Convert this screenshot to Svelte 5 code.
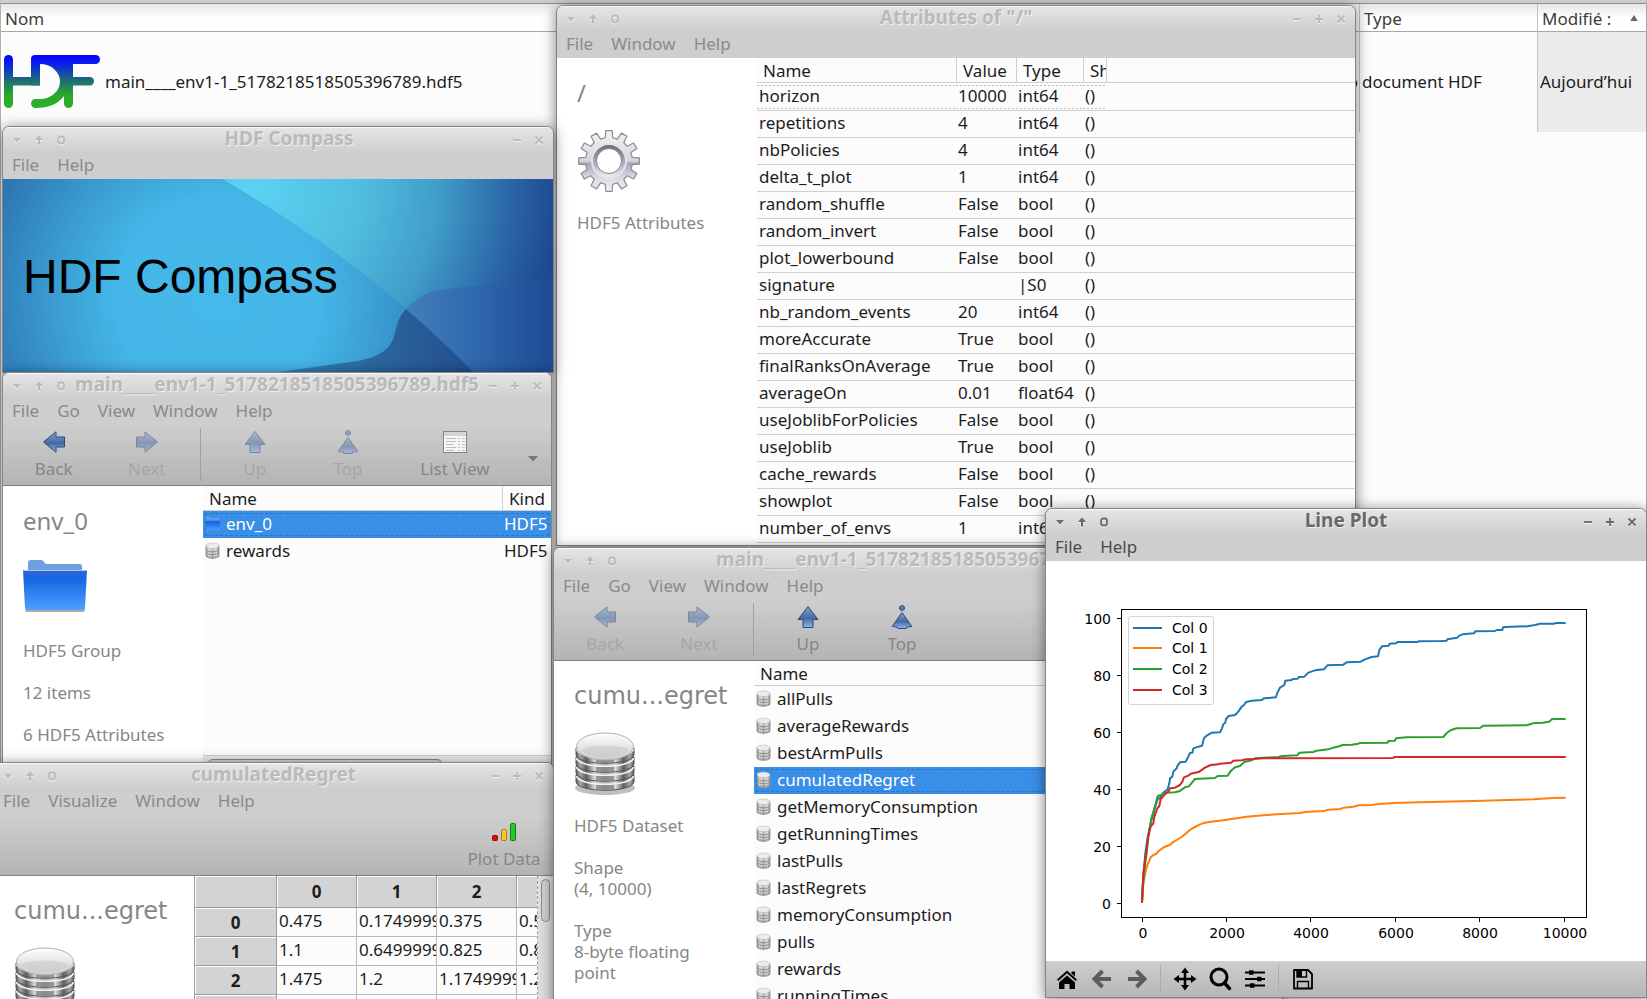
<script>
  const attributes = [
    ['horizon', '10000', 'int64'],
    ['repetitions', '4', 'int64'],
    ['nbPolicies', '4', 'int64'],
    ['delta_t_plot', '1', 'int64'],
    ['random_shuffle', 'False', 'bool'],
    ['random_invert', 'False', 'bool'],
    ['plot_lowerbound', 'False', 'bool'],
    ['signature', '', '|S0'],
    ['nb_random_events', '20', 'int64'],
    ['moreAccurate', 'True', 'bool'],
    ['finalRanksOnAverage', 'True', 'bool'],
    ['averageOn', '0.01', 'float64'],
    ['useJoblibForPolicies', 'False', 'bool'],
    ['useJoblib', 'True', 'bool'],
    ['cache_rewards', 'False', 'bool'],
    ['showplot', 'False', 'bool'],
    ['number_of_envs', '1', 'int64'],
  ];

  const datasets = [
    'allPulls', 'averageRewards', 'bestArmPulls', 'cumulatedRegret',
    'getMemoryConsumption', 'getRunningTimes', 'lastPulls', 'lastRegrets',
    'memoryConsumption', 'pulls', 'rewards', 'runningTimes',
  ];

  const regret = [
    ['0.475', '0.1749999', '0.375', '0.5'],
    ['1.1', '0.6499999', '0.825', '0.8'],
    ['1.475', '1.2', '1.1749999', '1.2'],
    ['', '', '', ''],
  ];

  // Curves in thirds of a pixel, relative to the top left of the axes group.
  const curves = [
    ['#1f77b4', '66,908 68,860 71,820 76,760 83,712 93,665 103,630 112,600 122,590 128,580 135,574 143,568 148,550 150,535 157,530 160,515 170,505 172,498 180,487 197,485 205,470 210,459 217,458 220,445 235,440 246,437 252,415 260,407 272,400 275,398 300,397 306,385 310,373 316,368 318,357 326,348 345,345 355,335 365,320 372,315 378,306 395,302 425,300 432,295 468,292 472,278 480,263 493,255 496,242 515,240 518,237 533,236 537,231 553,230 565,218 585,211 612,208 622,196 670,194 680,187 722,185 735,178 755,171 774,169 778,150 786,139 806,137 809,131 828,130 832,126 892,126 896,124 965,123 980,122 982,118 1012,113 1018,107 1028,103 1062,100 1066,94 1125,93 1130,90 1147,90 1149,82 1175,80 1222,79 1245,75 1260,71 1303,71 1308,69 1337,69'],
    ['#ff7f0e', '66,908 70,850 78,808 84,790 92,772 100,765 108,762 116,753 130,743 140,738 150,735 158,727 170,720 185,711 200,698 212,688 225,681 240,673 255,668 272,665 310,661 350,655 380,650 430,646 470,643 540,639 555,636 612,633 625,629 660,627 672,623 700,620 715,616 755,615 775,612 820,609 900,607 1060,603 1240,598 1300,594 1337,593'],
    ['#2ca02c', '66,908 68,870 74,800 80,760 85,712 90,680 94,655 100,635 107,612 113,588 125,584 137,578 165,577 180,573 186,568 195,562 207,559 214,550 225,537 285,534 293,528 323,527 333,512 345,502 360,498 373,486 395,481 405,475 475,471 487,468 532,466 538,458 580,456 590,452 625,448 640,443 660,438 668,435 696,434 715,431 720,429 803,428 805,423 825,422 828,415 860,412 970,411 980,399 993,390 1010,385 1080,384 1090,377 1220,376 1240,370 1267,368 1288,365 1295,358 1305,357 1337,357'],
    ['#d62728', '66,908 70,820 78,760 84,712 92,680 100,670 103,650 112,625 118,618 122,597 135,583 145,575 150,565 165,563 180,555 187,545 192,532 205,527 212,521 238,515 255,503 272,495 295,493 300,491 333,488 340,482 365,481 380,478 400,477 430,475 820,474 822,471 1337,471'],
  ];
  const xTicks = [[97, '0'], [181, '2000'], [265, '4000'], [350, '6000'], [434, '8000'], [519, '10000']];
  const yTicks = [[342, '0'], [285, '20'], [228, '40'], [171, '60'], [114, '80'], [57, '100']];
  const legendRows = [0, 20, 41, 62];

  const gear = (() => {
    const pts = [];
    const at = (r, deg) => {
      const a = (deg * Math.PI) / 180;
      pts.push(`${(32 + r * Math.cos(a)).toFixed(2)},${(32 + r * Math.sin(a)).toFixed(2)}`);
    };
    for (let i = 0; i < 12; i++) {
      const c = i * 30;
      at(23.5, c - 9); at(30.5, c - 6); at(30.5, c + 6); at(23.5, c + 9);
    }
    return pts.join(' ');
  })();
</script>

{#snippet titlebar(title, canMax = true)}
  <header class="titlebar">
    <button class="wb" aria-label="Window menu"><svg viewBox="0 0 12 12"><path d="M2 4h8L6 8.500z" fill="currentColor" /></svg></button>
    <button class="wb" aria-label="Shade"><svg viewBox="0 0 12 12"><path d="M6 1.500 10 6H7v4.500H5V6H2z" fill="currentColor" /></svg></button>
    <button class="wb" aria-label="Stick"><svg viewBox="0 0 12 12"><rect x="3" y="2.500" width="6" height="7" rx="2.500" fill="none" stroke="currentColor" stroke-width="1.800" /></svg></button>
    <h2>{title}</h2>
    <button class="wb" aria-label="Minimize"><svg viewBox="0 0 12 12"><path d="M2 6h8" stroke="currentColor" stroke-width="1.800" /></svg></button>
    {#if canMax}
      <button class="wb" aria-label="Maximize"><svg viewBox="0 0 12 12"><path d="M2 6h8M6 2v8" stroke="currentColor" stroke-width="1.800" /></svg></button>
    {/if}
    <button class="wb" aria-label="Close"><svg viewBox="0 0 12 12"><path d="m2.500 2.500 7 7m0-7-7 7" stroke="currentColor" stroke-width="1.800" /></svg></button>
  </header>
{/snippet}

{#snippet menubar(items)}
  <nav class="menubar">
    {#each items as item}<button>{item}</button>{/each}
  </nav>
{/snippet}

{#snippet arrow(kind)}
  <svg class="ico24" viewBox="0 0 24 24">
    {#if kind === 'left'}
      <path d="M1.500 12 14 1.800V7h8.500v10H14v5.200z" fill="url(#blue)" stroke="#2d4a73" />
    {:else if kind === 'right'}
      <path d="M22.500 12 10 1.800V7H1.500v10H10v5.200z" fill="url(#blue)" stroke="#2d4a73" />
    {:else if kind === 'up'}
      <path d="M12 1.500 22 14.500h-5v8H7v-8H2z" fill="url(#blue)" stroke="#2d4a73" />
    {:else}
      <circle cx="12" cy="3" r="2.500" fill="url(#blue)" stroke="#2d4a73" />
      <path d="M12 7.500 21.800 21.500l-5 .5-.5 1.500H7.700L7.200 22l-5-.5z" fill="url(#blue)" stroke="#2d4a73" />
    {/if}
  </svg>
{/snippet}

{#snippet tool(label, kind, disabled = false)}
  <button class="tool" {disabled}>{@render arrow(kind)}<span>{label}</span></button>
{/snippet}

{#snippet disk()}
  <svg class="disk" viewBox="0 0 16 18">
    <path d="M1 4v10.500c0 4 14 4 14 0V4z" fill="url(#metal)" stroke="#8b8b8b" stroke-width=".6" />
    <path d="M1 8c1 3 13 3 14 0M1 11c1 3 13 3 14 0M1 14c1 3 13 3 14 0" fill="none" stroke="#8a8a8a" stroke-width=".8" />
    <path d="M5 9.500v7M8 10v7.500M11 9.500v7" stroke="#777" stroke-width=".8" stroke-dasharray="1.500 1.500" />
    <ellipse cx="8" cy="4" rx="7" ry="3" fill="#ececec" stroke="#b5b5b5" stroke-width=".6" />
  </svg>
{/snippet}

{#snippet bigdisk()}
  <svg class="bigicon" viewBox="0 0 64 64">
    <ellipse cx="31" cy="56" rx="30" ry="7" fill="#000" opacity=".25" />
    {#each [43, 34, 25, 16] as y}
      <path d="M2 {y}v7C4 {y + 18} 58 {y + 18} 60 {y + 7}v-7z" fill="url(#chrome)" stroke="#555" />
      <path d="M22 {y + 9.5}q9 1 18 0v4.500q-9 1-18 0z" fill="#707070" opacity=".6" />
      <path d="M2.500 {y + 1}C5 {y + 12} 57 {y + 12} 59.500 {y + 1}" fill="none" stroke="#f2f2f2" stroke-width="1.600" />
    {/each}
    <ellipse cx="31" cy="14.500" rx="28.500" ry="13.500" fill="url(#lid)" stroke="#b0b0b0" />
    <path d="M7 18c6-6 42-6 48 0-6 9-42 9-48 0z" fill="#c9c9c9" opacity=".6" />
  </svg>
{/snippet}

<svg class="defs" aria-hidden="true">
  <defs>
    <linearGradient id="blue" x1="0" y1="0" x2="0" y2="1">
      <stop offset="0" stop-color="#86a5cf" /><stop offset=".5" stop-color="#4a6fa8" /><stop offset=".55" stop-color="#41679f" /><stop offset="1" stop-color="#8db8f5" />
    </linearGradient>
    <linearGradient id="metal" x1="0" y1="0" x2="1" y2="0">
      <stop offset="0" stop-color="#8e8e8e" /><stop offset=".25" stop-color="#e6e6e6" /><stop offset=".5" stop-color="#b5b5b5" /><stop offset=".75" stop-color="#e6e6e6" /><stop offset="1" stop-color="#8e8e8e" />
    </linearGradient>
    <linearGradient id="chrome" x1="0" y1="0" x2="1" y2="0">
      <stop offset="0" stop-color="#5a5a5a" /><stop offset=".07" stop-color="#a8a8a8" /><stop offset=".18" stop-color="#5e5e5e" /><stop offset=".32" stop-color="#d8d8d8" /><stop offset=".5" stop-color="#b0b0b0" /><stop offset=".68" stop-color="#d8d8d8" /><stop offset=".82" stop-color="#5e5e5e" /><stop offset=".93" stop-color="#a8a8a8" /><stop offset="1" stop-color="#5a5a5a" />
    </linearGradient>
    <linearGradient id="lid" x1="0" y1="0" x2="0" y2="1">
      <stop offset="0" stop-color="#fff" /><stop offset="1" stop-color="#cdcdcd" />
    </linearGradient>
    <linearGradient id="folder" x1="0" y1="0" x2="0" y2="1">
      <stop offset="0" stop-color="#2f62d8" /><stop offset=".25" stop-color="#1669e4" /><stop offset="1" stop-color="#4ea0ff" />
    </linearGradient>
    <linearGradient id="gearfill" x1="0" y1="0" x2="0" y2="1">
      <stop offset="0" stop-color="#f4f4f4" /><stop offset=".5" stop-color="#d4d4dc" /><stop offset=".54" stop-color="#a6a6bc" /><stop offset=".75" stop-color="#d6d6de" /><stop offset="1" stop-color="#f2f2f2" />
    </linearGradient>
    <linearGradient id="gearring" x1="0" y1="0" x2="0" y2="1">
      <stop offset="0" stop-color="#6c6c78" /><stop offset=".6" stop-color="#b0b0bc" /><stop offset="1" stop-color="#f0f0f4" />
    </linearGradient>
    <linearGradient id="hdf" gradientUnits="userSpaceOnUse" x1="0" y1="0" x2="0" y2="53">
      <stop offset="0" stop-color="#0000ff" /><stop offset=".15" stop-color="#0a1cf0" /><stop offset=".5" stop-color="#1f7072" /><stop offset=".75" stop-color="#29a82b" /><stop offset="1" stop-color="#2bb02b" />
    </linearGradient>
  </defs>
</svg>

<main class="desktop">
  <section class="files">
    <table>
      <colgroup><col /><col class="c-size" /><col class="c-type" /><col class="c-date" /></colgroup>
      <thead>
        <tr>
          <th>Nom</th><th></th><th class="sep">Type</th>
          <th class="sep"><div class="sorted">Modifié :<svg viewBox="0 0 10 8" width="8" height="6"><path d="M0 8 5 0l5 8z" fill="#666" /></svg></div></th>
        </tr>
      </thead>
      <tbody>
        <tr>
          <td>
            <div class="file">
              <svg viewBox="0 0 96 53" width="96" height="53" fill="url(#hdf)">
                <rect width="9" height="53" rx="4.500" />
                <path d="M4 22h32v8.500H4z" />
                <path d="M31 0h5v30.500h-9V4q0-4 4-4z" />
                <rect x="30" width="66" height="9" rx="4.500" />
                <rect x="60" width="9" height="53" rx="4.500" />
                <rect x="60" y="22" width="30" height="8.500" rx="4.200" />
                <path d="M36 0h33v30l-9 11C54 49 45 53 31.500 53a4.500 4.500 0 0 1 0-9H36A20 17.500 0 0 0 36 9z" />
              </svg>
              main____env1-1_5178218518505396789.hdf5
            </div>
          </td>
          <td class="size">Mo</td>
          <td class="sep">document HDF</td>
          <td class="sep date">Aujourd’hui</td>
        </tr>
      </tbody>
    </table>
  </section>

  <section class="win attrs">
    {@render titlebar('Attributes of "/"')}
    {@render menubar(['File', 'Window', 'Help'])}
    <div class="body">
      <aside>
        <h3>/</h3>
        <svg class="bigicon" viewBox="0 0 64 64">
          <polygon points={gear} fill="url(#gearfill)" stroke="#8c8c92" stroke-width="1.200" stroke-linejoin="round" />
          <circle cx="32" cy="32" r="18" fill="#e2e2e8" />
          <circle cx="32" cy="32" r="16" fill="url(#gearring)" />
          <circle cx="32" cy="32" r="12.500" fill="#fff" stroke="#85858f" />
        </svg>
        <p>HDF5 Attributes</p>
      </aside>
      <div class="list">
        <table class="grid-lines">
          <colgroup><col class="w199" /><col class="w60" /><col class="w67" /><col class="w23" /><col /></colgroup>
          <thead><tr><th>Name</th><th>Value</th><th>Type</th><th>Sh</th><th></th></tr></thead>
          <tbody>
            {#each attributes as [name, value, type], i}
              <tr class:focus={i === 0}><td>{name}</td><td>{value}</td><td>{type}</td><td>()</td><td></td></tr>
            {/each}
          </tbody>
        </table>
      </div>
    </div>
  </section>

  <section class="win compass">
    {@render titlebar('HDF Compass', false)}
    {@render menubar(['File', 'Help'])}
    <svg class="banner" viewBox="0 0 550 193">
      <defs>
        <radialGradient id="glow" gradientUnits="userSpaceOnUse" cx="215" cy="120" r="270">
          <stop offset="0" stop-color="#45b9e9" /><stop offset=".38" stop-color="#44b6e7" /><stop offset=".62" stop-color="#3a9bd0" /><stop offset="1" stop-color="#2767a5" />
        </radialGradient>
        <radialGradient id="sky" gradientUnits="userSpaceOnUse" cx="250" cy="10" r="310">
          <stop offset="0" stop-color="#5bd2f3" /><stop offset=".35" stop-color="#50bde0" /><stop offset=".6" stop-color="#409dc8" /><stop offset=".82" stop-color="#2b68a8" /><stop offset="1" stop-color="#1c468d" />
        </radialGradient>
        <linearGradient id="sea" x1="0" y1="0" x2="1" y2="0">
          <stop offset="0" stop-color="#447fba" /><stop offset=".5" stop-color="#2e66ac" /><stop offset="1" stop-color="#1d4a92" />
        </linearGradient>
        <linearGradient id="deep" gradientUnits="userSpaceOnUse" x1="280" y1="193" x2="460" y2="193">
          <stop offset="0" stop-color="#3188bf" /><stop offset=".5" stop-color="#2c679f" /><stop offset="1" stop-color="#23508f" />
        </linearGradient>
      </defs>
      <rect width="550" height="193" fill="url(#glow)" />
      <path d="M219 0Q320 58 403 130T470 193H550V0z" fill="url(#sky)" />
      <path d="M403 130C415 119 424 111 445 110L550 99V193H470Q440 162 403 130z" fill="url(#sea)" />
      <path d="M275 193 355 182C404 172 384 150 403 130Q440 162 470 193z" fill="url(#deep)" />
      <text x="20" y="114">HDF Compass</text>
    </svg>
  </section>

  <section class="win group">
    {@render titlebar('main____env1-1_5178218518505396789.hdf5')}
    {@render menubar(['File', 'Go', 'View', 'Window', 'Help'])}
    <div class="toolbar">
      {@render tool('Back', 'left')}
      {@render tool('Next', 'right', true)}
      <i class="tsep"></i>
      {@render tool('Up', 'up', true)}
      {@render tool('Top', 'top', true)}
      <button class="tool wide">
        <svg class="ico24" viewBox="0 0 24 24">
          <rect x=".5" y="1.500" width="23" height="21" fill="#f6f6f6" stroke="#858585" />
          <path d="M1 2h22v4H1z" fill="#d4d4d4" />
          <path d="M3 8.500h10M3 11.500h10M3 14.500h8M3 17.500h10M3 20.500h8M15 8.500h2M15 11.500h2M15 14.500h2M15 17.500h2M15 20.500h2M19 8.500h3M19 11.500h3M19 14.500h3M19 17.500h3M19 20.500h3" stroke="#bdbdbd" />
        </svg>
        <span>List View</span>
      </button>
      <button class="drop" aria-label="View options"><svg viewBox="0 0 10 6" width="10" height="6"><path d="M0 0h10L5 5.500z" fill="#777" /></svg></button>
    </div>
    <div class="body">
      <aside>
        <h3>env_0</h3>
        <svg class="bigicon" viewBox="0 4 64 64">
          <path d="M5 22V10q0-3 3-3h10q2 0 3 2l2 2h34q2 0 2 2v9z" fill="#6f9fdc" />
          <path d="M2 56h60l-1 3H3z" fill="#555" opacity=".5" />
          <path d="M0 17h64l-2 38q0 2-2 2H4q-2 0-2-2z" fill="url(#folder)" />
          <path d="M.5 17.500h63" stroke="#a9c8f5" />
        </svg>
        <p>HDF5 Group</p><p>12 items</p><p>6 HDF5 Attributes</p>
      </aside>
      <div class="list">
        <table>
          <colgroup><col /><col class="w49" /></colgroup>
          <thead><tr><th>Name</th><th>Kind</th></tr></thead>
          <tbody>
            <tr class="selected">
              <td><div class="item"><svg class="disk" viewBox="0 0 16 18"><path d="M1 2h5l1 1h8v4H1z" fill="#5f9be6" /><path d="M0 6h16v10H0z" fill="url(#folder)" /></svg>env_0</div></td>
              <td>HDF5</td>
            </tr>
            <tr><td><div class="item">{@render disk()}rewards</div></td><td>HDF5</td></tr>
          </tbody>
        </table>
        <div class="hscroll"><i></i></div>
      </div>
    </div>
  </section>

  <section class="win regret">
    {@render titlebar('cumulatedRegret')}
    {@render menubar(['File', 'Visualize', 'Window', 'Help'])}
    <div class="toolbar end">
      <button class="tool">
        <svg class="ico24" viewBox="0 0 24 24">
          <rect x=".5" y="15.500" width="5" height="5" rx="1" fill="#d01010" stroke="#8c0a0a" />
          <rect x="9.500" y="9.500" width="5" height="11" rx="1" fill="#f7c32a" stroke="#b07a10" />
          <rect x="18.500" y="3.500" width="5" height="17" rx="1" fill="#22cc22" stroke="#157a15" />
        </svg>
        <span>Plot Data</span>
      </button>
    </div>
    <div class="body">
      <aside>
        <h3 class="alt">cumu...egret</h3>
        {@render bigdisk()}
      </aside>
      <div class="sheet">
        <table>
          <colgroup><col class="w82" /><col class="w80" /><col class="w80" /><col class="w80" /><col class="w80" /></colgroup>
          <thead><tr><th></th><th>0</th><th>1</th><th>2</th><th></th></tr></thead>
          <tbody>
            {#each regret as row, i}
              <tr><th>{i}</th>{#each row as v}<td>{v}</td>{/each}</tr>
            {/each}
          </tbody>
        </table>
      </div>
      <div class="vscroll"><i></i></div>
    </div>
  </section>

  <section class="win datasets">
    {@render titlebar('main____env1-1_5178218518505396789.hdf5')}
    {@render menubar(['File', 'Go', 'View', 'Window', 'Help'])}
    <div class="toolbar">
      {@render tool('Back', 'left', true)}
      {@render tool('Next', 'right', true)}
      <i class="tsep"></i>
      {@render tool('Up', 'up')}
      {@render tool('Top', 'top')}
    </div>
    <div class="body">
      <aside>
        <h3 class="alt">cumu...egret</h3>
        {@render bigdisk()}
        <p>HDF5 Dataset</p>
        <p>Shape<br />(4, 10000)</p>
        <p>Type<br />8-byte floating point</p>
      </aside>
      <div class="list">
        <table>
          <thead><tr><th>Name</th></tr></thead>
          <tbody>
            {#each datasets as name}
              <tr class:selected={name === 'cumulatedRegret'}><td><div class="item">{@render disk()}{name}</div></td></tr>
            {/each}
          </tbody>
        </table>
      </div>
    </div>
  </section>

  <section class="win plot active">
    {@render titlebar('Line Plot')}
    {@render menubar(['File', 'Help'])}
    <svg class="figure" viewBox="0 0 600 400">
      <rect width="600" height="400" fill="#fff" />
      <g transform="translate(74 39) scale(.33333)" fill="none" stroke-width="6" stroke-linejoin="round">
        {#each curves as [color, points]}<polyline {points} stroke={color} />{/each}
      </g>
      <rect x="75.500" y="48.500" width="465" height="308" fill="none" stroke="#000" />
      {#each xTicks as [x, label]}
        <path d="M{x - 0.5} 357v4" stroke="#000" />
        <text {x} y="377" text-anchor="middle">{label}</text>
      {/each}
      {#each yTicks as [y, label]}
        <path d="M71 {y + 0.5}h4" stroke="#000" />
        <text x="65" y={y + 6} text-anchor="end">{label}</text>
      {/each}
      <rect x="82.500" y="55.500" width="85" height="88" rx="2" fill="#fff" stroke="#d4d4d4" />
      {#each curves as [color], i}
        <path d="M87 {67 + legendRows[i]}h29" stroke={color} stroke-width="2" />
        <text x="126" y={72 + legendRows[i]}>Col {i}</text>
      {/each}
    </svg>
    <div class="navbar">
      <button aria-label="Home"><svg viewBox="0 0 24 24"><path d="M12 8.500 20 15.500V22h-5.500v-5h-5v5H4v-6.500zM12 3.500l10 9-1.300 1.500L12 6.300 3.300 14 2 12.500zM16.500 4.500H20v5l-3.500-3z" /></svg></button>
      <button aria-label="Previous view"><svg viewBox="0 0 24 24"><path d="M21 12H5M12.500 4 4.500 12l8 8" fill="none" stroke="#5c5c5c" stroke-width="4" /></svg></button>
      <button aria-label="Next view"><svg viewBox="0 0 24 24"><path d="M3 12h16M11.500 4l8 8-8 8" fill="none" stroke="#5c5c5c" stroke-width="4" /></svg></button>
      <i></i>
      <button aria-label="Pan"><svg viewBox="0 0 24 24"><path d="M12 4v16M4 12h16" stroke="#000" stroke-width="2.500" /><path d="M12 .5 16 6H8zM12 23.500 8 18h8zM.5 12 6 8v8zM23.500 12 18 16V8z" /></svg></button>
      <button aria-label="Zoom"><svg viewBox="0 0 24 24"><circle cx="11" cy="10" r="8" fill="none" stroke="#000" stroke-width="3" /><path d="m16.500 16 5 5.500" stroke="#000" stroke-width="3.500" stroke-linecap="round" /></svg></button>
      <button aria-label="Configure subplots"><svg viewBox="0 0 24 24"><path d="M2 5.500h20M2 12h20M2 18.500h20" stroke="#000" stroke-width="1.800" /><path d="M6 3.200h4.500v4.600H6zM14 9.700h4.500v4.600H14zM7 16.200h4.500v4.600H7z" /></svg></button>
      <i></i>
      <button aria-label="Save"><svg viewBox="0 0 24 24"><path d="M3 3h14l4 4V21.500H3z" fill="none" stroke="#000" stroke-width="1.800" stroke-linejoin="round" /><path d="M6 3h9.500v7H6zM6.500 21v-6.500h11V21" fill="none" stroke="#000" stroke-width="1.400" /><path d="M6 3h5v7H6z" /></svg></button>
    </div>
  </section>
</main>

<style>
  :global(body) { margin: 0; }

  .desktop {
    position: relative;
    height: 100vh;
    min-height: 600px;
    overflow: hidden;
    background: #fcfcfc;
    color: #1c1c1c;
    font: 17px/21px 'Noto Sans', 'Open Sans', sans-serif;
    white-space: nowrap;
  }
  .defs { position: absolute; width: 0; height: 0; }

  button {
    padding: 0;
    border: 0;
    background: none;
    color: inherit;
    font: inherit;
  }
  table { width: 100%; border-collapse: separate; border-spacing: 0; table-layout: fixed; }
  th, td { padding: 0; text-align: left; font-weight: 400; box-sizing: border-box; overflow: hidden; }

  /* File manager behind the windows */
  .files {
    box-sizing: border-box;
    height: 100%;
    border-top: 3px solid #cdcdcd;
    border-left: 1px solid #b0b0b0;
    border-right: 1px solid #a8a8a8;
  }
  .files table { border-top: 1px solid #8c8c8c; }
  .files th {
    height: 28px;
    padding: 1px 4px 0;
    border-bottom: 1px solid #a8a8a8;
    background: linear-gradient(#e6e6e6, #fff 50%);
    color: #3c3c3c;
  }
  .files td { height: 100px; padding: 0 2px 2px; }
  .files td:first-child { padding: 0 3px 2px; }
  .files th.sep, .files td.sep { border-left: 1px solid #c4c4c4; }
  .files td.date { background: #ebebeb; }
  .files td.size { text-align: right; padding: 0 1px 2px; }
  .c-size { width: 120px; }
  .c-type { width: 178px; }
  .c-date { width: 109px; }
  .sorted { display: flex; justify-content: space-between; align-items: center; padding-right: 4px; }
  .file { display: flex; align-items: center; gap: 5px; }

  /* Window chrome */
  .win {
    position: absolute;
    box-sizing: border-box;
    display: flex;
    flex-direction: column;
    border: 1px solid #858585;
    border-radius: 7px 7px 0 0;
    background: #cecece;
    box-shadow: 0 2px 14px rgba(0, 0, 0, .5);
    overflow: hidden;
    --ink: #8a8a8a;
    --title: #bababa;
  }
  .win.active { --ink: #4a4a4a; --title: #6a6a6a; }
  .attrs { left: 556px; top: 5px; width: 800px; height: 541px; }
  .compass { left: 2px; top: 126px; width: 552px; }
  .group { left: 2px; top: 372px; width: 550px; height: 392px; }
  .regret { left: -7px; top: 762px; width: 561px; }
  .datasets { left: 553px; top: 547px; width: 730px; }
  .plot { right: 0; top: 508px; width: 602px; }

  .titlebar {
    display: flex;
    align-items: center;
    height: 25px;
    padding: 0 3px;
    background: linear-gradient(#e6e6e6, #cecece);
    box-shadow: inset 0 1px #f8f8f8;
    color: var(--title);
  }
  .titlebar h2 {
    flex: 1;
    margin: 0;
    padding-bottom: 2px;
    text-align: center;
    font-size: 19px;
    font-weight: 700;
    line-height: 23px;
    text-shadow: 1px 1px #efefef;
  }
  .wb { width: 22px; height: 22px; display: grid; place-items: center; }
  .wb svg { width: 12px; height: 12px; filter: drop-shadow(0 1px #f2f2f2); }

  .menubar { display: flex; height: 27px; color: var(--ink); }
  .menubar button { padding: 0 9px 3px; }

  .toolbar {
    display: flex;
    height: 60px;
    padding-left: 4px;
    border-bottom: 1px solid #808080;
    background: linear-gradient(#cecece, #b4b4b4);
    color: #868686;
  }
  .toolbar.end { justify-content: flex-end; padding-right: 2px; }
  .tool {
    display: flex;
    flex-direction: column;
    align-items: center;
    gap: 4px;
    width: 94px;
    padding-top: 5px;
  }
  .tool:disabled { color: #a6a6a6; }
  .tool:disabled svg { opacity: .5; }
  .wide { width: 122px; }
  .ico24 { width: 24px; height: 24px; }
  .tsep { width: 1px; margin: 3px 7px 4px; background: #a0a0a0; }
  .drop { width: 36px; }

  .body { display: flex; flex: 1; background: #fff; min-height: 0; }
  aside {
    box-sizing: border-box;
    flex: none;
    width: 200px;
    padding: 19px 20px 0;
    color: #868686;
    white-space: normal;
  }
  .body aside h3 { margin: 0 0 20px; font-size: 24px; font-weight: 400; line-height: 32px; white-space: nowrap; }
  aside h3.alt { font-family: 'DejaVu Sans', sans-serif; }
  .bigicon { display: block; width: 64px; height: 64px; margin-bottom: 19px; }
  aside p { margin: 0 0 21px; }

  /* Lists */
  .list { flex: 1; min-width: 0; background: #fcfcfc; display: flex; flex-direction: column; }
  .list th { height: 25px; padding: 0 6px; border-bottom: 1px solid #cfcfcf; }
  .list th + th { border-left: 1px solid #cfcfcf; }
  .list td { height: 27px; padding: 0 2px 2px; }
  .item { display: flex; align-items: center; gap: 6px; }
  .disk { width: 15px; height: 17px; }
  .selected { background: #398ee7; color: #fff; outline: 1px dashed #2f74bd; outline-offset: -3px; }
  .list .grid-lines td { padding: 0 2px 3px; border-bottom: 1px solid #cfcfcf; }
  .grid-lines .focus td { height: 28px; }
  .focus td:not(:last-child) {
    background: linear-gradient(90deg, #bbb 50%, transparent 50%) 0 2px / 4px 1px repeat-x,
      linear-gradient(90deg, #bbb 50%, transparent 50%) 0 25px / 4px 1px repeat-x;
  }
  .w199 { width: 199px; }
  .w60 { width: 60px; }
  .w67 { width: 67px; }
  .w23 { width: 23px; }
  .w49 { width: 49px; }
  .w80 { width: 80px; }
  .w82 { width: 82px; }
  .hscroll { box-sizing: border-box; height: 8px; margin-top: auto; padding: 3px 4px 0; border-top: 1px solid #cfcfcf; background: #ececec; }
  .hscroll i { display: block; width: 234px; height: 10px; border: 1px solid #888; border-radius: 6px; background: #d6d6d6; }

  .banner { display: block; width: 100%; }
  .banner text { font: 48px 'Liberation Sans', Arial, sans-serif; }

  /* Spreadsheet */
  .sheet { flex: 1; min-width: 0; overflow: hidden; border-left: 1px solid #9c9c9c; border-right: 1px dashed #9c9c9c; background: #fcfcfc; }
  .sheet table { width: 402px; }
  .sheet td, .sheet th { height: 29px; border-right: 1px solid #b8b8b8; border-bottom: 1px solid #b8b8b8; }
  .sheet td { padding: 0 2px 3px; }
  .sheet th { background: #d3d3d3; text-align: center; font-weight: 700; box-shadow: inset 1px 1px #fff; border-color: #9c9c9c; }
  .sheet thead th { height: 32px; }
  .vscroll { width: 15px; background: #dedede; }
  .vscroll i { display: block; width: 7px; height: 41px; margin: 3px 3px 0; border: 1px solid #8a8a8a; border-radius: 5px; background: #d0d0d0; }

  /* Plot */
  .figure { display: block; width: 100%; }
  .figure text { font: 14px 'DejaVu Sans', sans-serif; }
  .navbar {
    display: flex;
    align-items: center;
    height: 36px;
    padding-left: 3px;
    background: linear-gradient(#cecece, #b6b6b6);
  }
  .navbar button { width: 35px; height: 28px; display: grid; place-items: center; }
  .navbar svg { width: 24px; height: 24px; }
  .navbar i { width: 1px; height: 28px; margin: 0 6px; background: #adadad; }
</style>
